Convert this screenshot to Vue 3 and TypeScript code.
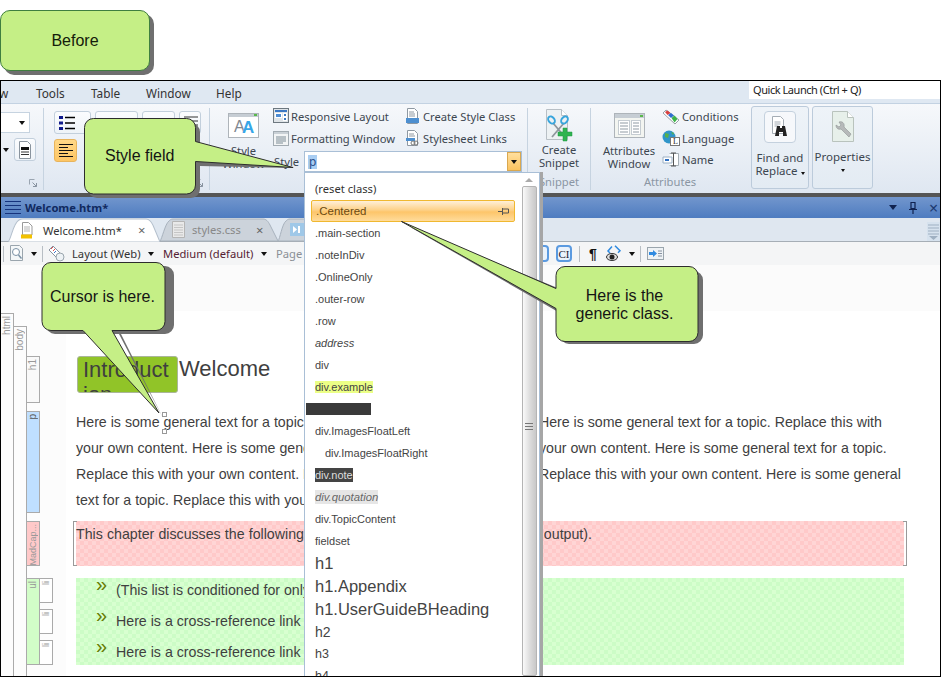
<script setup lang="ts">
interface Item { label: string; cls?: string }
const items: Item[] = [
  { label: '(reset class)', cls: 'reset' },
  { label: '.Centered', cls: 'hot' },
  { label: '.main-section' },
  { label: '.noteInDiv' },
  { label: '.OnlineOnly' },
  { label: '.outer-row' },
  { label: '.row' },
  { label: 'address', cls: 'ital' },
  { label: 'div' },
  { label: 'div.example', cls: 'ex' },
  { label: '', cls: 'bar' },
  { label: 'div.ImagesFloatLeft' },
  { label: 'div.ImagesFloatRight', cls: 'ind' },
  { label: 'div.note', cls: 'note' },
  { label: 'div.quotation', cls: 'quo' },
  { label: 'div.TopicContent' },
  { label: 'fieldset' },
  { label: 'h1', cls: 'h1' },
  { label: 'h1.Appendix', cls: 'h1' },
  { label: 'h1.UserGuideBHeading', cls: 'h1' },
  { label: 'h2', cls: 'h2' },
  { label: 'h3', cls: 'h3' },
  { label: 'h4', cls: 'h3' },
]
const paragraph = [
  'Here is some general text for a topic. Replace this with your own content. Here is some general text for a topic. Replace this with',
  'your own content. Here is some general text for a topic. Replace this with your own content. Here is some general text for a topic.',
  'Replace this with your own content. Here is some general text for a topic. Replace this with your own content. Here is some general',
  'text for a topic. Replace this with your own content.',
]
const listRows = [
  '(This list is conditioned for only one target.)',
  'Here is a cross-reference link to another topic.',
  'Here is a cross-reference link to another topic.',
]
</script>

<template>
  <div class="page">
    <div class="top">
      <div class="before">Before</div>
    </div>

    <div class="win">
      <div class="menu">
        <span class="m m0">w</span><span class="m m1">Tools</span><span class="m m2">Table</span><span class="m m3">Window</span><span class="m m4">Help</span>
        <div class="quick">Quick Launch (Ctrl + Q)</div>
      </div>

      <div class="ribbon">
        <div class="g g1">
          <div class="combo0"><i class="arr"></i></div>
          <div class="row0">
            <i class="arr"></i>
            <div class="btn b22">
              <svg width="14" height="18" viewBox="0 0 14 18"><path d="M1.5.5h8l3 3v14h-11z" fill="#fff" stroke="#8a949e"/><path d="M3 6h8v3H3z" fill="#111"/><path d="M3 11h8M3 13.500h8" stroke="#333"/></svg>
            </div>
          </div>
          <svg class="launch" width="8" height="8" viewBox="0 0 8 8"><path d="M.5.5h5M.5.5v5" stroke="#9aa5b1" fill="none"/><path d="M7.500 7.500l-4-4M7.500 4v3.500H4" stroke="#8893a0" fill="none"/></svg>
        </div>

        <div class="g g2">
          <div class="r2">
            <div class="btn bl1">
              <svg width="16" height="14" viewBox="0 0 16 14"><path d="M0 0h4v3H0zM0 5.500h4v3H0zM0 11h4v3H0z" fill="#101a8c"/><path d="M6 1.500h10M6 7h10M6 12.500h10" stroke="#000" stroke-width="1.500"/></svg>
            </div>
            <div class="btn bl2"></div>
            <div class="btn bl3"></div>
            <div class="btn bl4">
              <svg width="16" height="14" viewBox="0 0 16 14"><path d="M2 1h14M2 5h14M2 9h14M2 13h14" stroke="#333"/></svg>
            </div>
          </div>
          <div class="r2">
            <div class="btn act">
              <svg width="14" height="13" viewBox="0 0 14 13"><path d="M0 .5h14M0 3.500h9M0 6.500h14M0 9.500h9M0 12.500h14" stroke="#111"/></svg>
            </div>
          </div>
          <svg class="launch" width="8" height="8" viewBox="0 0 8 8"><path d="M.5.5h5M.5.5v5" stroke="#9aa5b1" fill="none"/><path d="M7.500 7.500l-4-4M7.500 4v3.500H4" stroke="#8893a0" fill="none"/></svg>
        </div>

        <div class="g g3">
          <div class="big stylewin">
            <svg width="31" height="25" viewBox="0 0 31 25">
              <rect x=".5" y=".5" width="30" height="24" fill="#fff" stroke="#aeb4ba"/>
              <rect x="1" y="1" width="29" height="3" fill="#c6cdd4"/>
              <rect x="26" y="1" width="3" height="2" fill="#5ab84c"/>
              <text x="6" y="19" font-size="16" font-family="Liberation Sans" fill="#7f8891">A</text>
              <text x="14" y="20" font-size="17" font-weight="700" font-family="Liberation Sans" fill="#37a6e8">A</text>
            </svg>
            <span class="lbl">Style<br />Window</span>
          </div>
          <div class="cols">
            <div class="col c1">
              <div class="it">
                <svg width="16" height="16" viewBox="0 0 16 16"><rect x=".5" y=".5" width="15" height="14" fill="#dfe4e8" stroke="#6d7880"/><path d="M2 2h12v2H2z" fill="#3b78c4"/><path d="M2 5h7v5H2z" fill="#fff"/><path d="M3 6h5v3H3z" fill="#4f8dd3"/><path d="M10 5h4v8h-4z" fill="#fff"/><path d="M11 6h2v2h-2zM11 10h2v2h-2z" fill="#3b78c4"/></svg>
                <span>Responsive Layout</span>
              </div>
              <div class="it">
                <svg width="16" height="15" viewBox="0 0 16 15"><rect x=".5" y=".5" width="15" height="14" fill="#f2f4f5" stroke="#a2abb2"/><path d="M1 1h14v2H1z" fill="#c9d0d6"/><path d="M3 6h10M3 8h10M3 10h10M3 12h7" stroke="#7d8c96"/></svg>
                <span>Formatting Window</span>
              </div>
            </div>
            <div class="col c2">
              <div class="it">
                <svg width="13" height="16" viewBox="0 0 13 16"><path d="M1.500.5h7l3 3v12h-10z" fill="#fff" stroke="#8e98a2"/><path d="M3 4h5M3 6h6M3 8h6" stroke="#8e98a2"/><path d="M0 10h13v5H0z" fill="#4d8fd0"/></svg>
                <span>Create Style Class</span>
              </div>
              <div class="it">
                <svg width="13" height="16" viewBox="0 0 13 16"><path d="M1.500.5h7l3 3v12h-10z" fill="#fff" stroke="#8e98a2"/><path d="M3 4h5M3 6h6" stroke="#8e98a2"/><path d="M0 8h9v3H0z" fill="#4d8fd0"/><circle cx="7" cy="13" r="2" fill="none" stroke="#777"/><circle cx="10" cy="13" r="2" fill="none" stroke="#777"/></svg>
                <span>Stylesheet Links</span>
              </div>
            </div>
          </div>
          <div class="stylefield">
            <span class="slabel">Style</span>
            <div class="sinput"><span class="sel">p</span><div class="sdrop"><i class="arr"></i></div></div>
          </div>
        </div>

        <div class="g g4">
          <div class="big snip">
            <svg width="28" height="33" viewBox="0 0 28 33">
              <path d="M1.500.5h15l6 6v24h-21z" fill="#edf1f3" stroke="#b8bfc5"/>
              <path d="M16.500.5v6h6" fill="#fff" stroke="#b8bfc5"/>
              <path d="M8 14l11 13M19 14L7 28" stroke="#8f979d" stroke-width="1.800"/>
              <ellipse cx="6.500" cy="11" rx="2.800" ry="4" transform="rotate(-40 6.500 11)" fill="none" stroke="#38a5dc" stroke-width="2"/>
              <ellipse cx="19.500" cy="11" rx="2.800" ry="4" transform="rotate(40 19.500 11)" fill="none" stroke="#38a5dc" stroke-width="2"/>
              <path d="M18 19h4v4h5v4h-5v5h-4v-5h-5v-4h5z" fill="#2fb350" stroke="#1e9a40" stroke-width=".5"/>
            </svg>
            <span class="lbl">Create<br />Snippet</span>
          </div>
          <span class="glabel">Snippet</span>
        </div>

        <div class="g g5">
          <div class="big attr">
            <svg width="31" height="25" viewBox="0 0 31 25">
              <rect x=".5" y=".5" width="30" height="24" fill="#f3f5f1" stroke="#aeb4ba"/>
              <rect x="1" y="1" width="29" height="4" fill="#c6cdd4"/>
              <rect x="26" y="2" width="3" height="2" fill="#5ab84c"/>
              <rect x="4.500" y="7.500" width="11" height="14" fill="#fff" stroke="#c5ccd2"/>
              <rect x="17.500" y="7.500" width="9" height="14" fill="#fff" stroke="#c5ccd2"/>
              <path d="M6 10h8M6 13h8M6 16h8M6 19h8M19 10h6M19 13h6M19 16h6M19 19h6" stroke="#8f9aa3"/>
            </svg>
            <span class="lbl">Attributes<br />Window</span>
          </div>
          <div class="col c3">
            <div class="it">
              <svg width="18" height="16" viewBox="0 0 18 16"><path d="M1 4l3-3 13 10-4 4z" fill="#fff" stroke="#9aa0a6"/><path d="M3 3l2.500-1.500 3 2.500-3 2z" fill="#d83f3f"/><path d="M6 6l3-2 3 2.500-3 2.500z" fill="#2f6fd0"/><path d="M9.500 9l3-2.500 3 3.500-3 3.500z" fill="#3db24a"/></svg>
              <span>Conditions</span>
            </div>
            <div class="it">
              <svg width="18" height="16" viewBox="0 0 18 16"><circle cx="7" cy="7" r="6.500" fill="#2f95c9"/><path d="M3 3l4 1-1 4-3-1zM9 2l3 1-1 2z" fill="#57b04a"/><rect x="8.500" y="7.500" width="9" height="8" fill="#fff" stroke="#777"/><text x="11" y="14" font-size="8" font-family="Liberation Serif" fill="#222">L</text></svg>
              <span>Language</span>
            </div>
            <div class="it">
              <svg width="18" height="15" viewBox="0 0 18 15"><path d="M7.500 1.500h9v12h-9" fill="#fff" stroke="#a5aeb5"/><path d="M1 5h9v6H1z" fill="#fff" stroke="#9cb0c4"/><path d="M3 7h4v2H3z" fill="#2f6fc1"/><path d="M11.500 1v13M9 1h5M9 14h5" stroke="#555"/></svg>
              <span>Name</span>
            </div>
          </div>
          <span class="glabel">Attributes</span>
        </div>

        <div class="g6">
          <div class="tall find">
            <div class="icobox">
              <svg width="18" height="22" viewBox="0 0 18 22"><path d="M1.500.5h8l3 3v14h-11z" fill="#fff" stroke="#a5adb5"/><path d="M3.500 6h6M3.500 8h6M3.500 10h4" stroke="#a5adb5"/><path d="M6 10h3v2h2v-2h3l2 10h-4v-4H8v4H4z" fill="#222"/></svg>
            </div>
            <span class="lbl">Find and<br />Replace <i class="arr small"></i></span>
          </div>
          <div class="tall props">
            <svg class="wrench" width="22" height="31" viewBox="0 0 22 31"><path d="M.5.500h15l6 6v24H.5z" fill="#e7f0ea" stroke="#b9c3bd"/><path d="M15.500.5v6h6" fill="#fff" stroke="#b9c3bd"/><path d="M17 26l-8-8c-3 1-5-1-5-4l3 2 2-2-2-3c3-1 6 1 5 5l7 7z" fill="#b6b9b9" stroke="#8f9393" stroke-width=".6"/></svg>
            <span class="lbl">Properties</span>
            <i class="arr small"></i>
          </div>
        </div>
      </div>

      <div class="band"></div>

      <div class="title">
        <svg width="16" height="13" viewBox="0 0 16 13"><path d="M0 .5h16M0 4.500h16M0 8.500h16M0 12.500h16" stroke="#16337c"/></svg>
        <b>Welcome.htm*</b>
        <div class="tctl">
          <i class="tarr"></i>
          <svg width="8" height="12" viewBox="0 0 8 12"><path d="M2 .5h4v6H2zM0 7.500h8M4 8v4" fill="none" stroke="#10224f" stroke-width="1.200"/></svg>
          <span class="tx">×</span>
        </div>
      </div>

      <div class="tabs">
        <div class="tab on">
          <svg class="tabbg" viewBox="0 0 152 23" preserveAspectRatio="none"><path d="M0 23c3-2 5-18 11-21 1-1 2-1 4-1h123c3 0 5 2 7 6l7 16z" fill="#fff" stroke="#b3bfcc"/></svg>
          <svg class="tabico" width="12" height="17" viewBox="0 0 12 17"><path d="M1.500.5h6l3.500 3.500v9H1.500z" fill="#fff" stroke="#9a9a9a"/><path d="M3 5h6M3 7h6M3 9h6" stroke="#b5b5b5"/><rect y="12.500" width="11" height="4" fill="#f2c100"/></svg>
          <span class="tt">Welcome.htm*</span><span class="tc">×</span>
        </div>
        <div class="tab off">
          <svg class="tabbg" viewBox="0 0 118 23" preserveAspectRatio="none"><path d="M0 23c2-2 5-17 9-20 1-1 2-2 4-2h90c3 0 5 2 7 6l8 16z" fill="#ccd3db" stroke="#a8b2bd"/></svg>
          <svg class="tabico2" width="13" height="17" viewBox="0 0 13 17"><path d="M.5.500h12v16H.5z" fill="#e9e9e9" stroke="#b5b5b5"/><path d="M2 4h9M2 6.500h9M2 9h9M2 11.500h9M2 14h9" stroke="#c5c5c5"/></svg>
          <span class="tt2">styles.css</span><span class="tc2">×</span>
        </div>
        <div class="tab last">
          <svg class="tabbg" viewBox="0 0 30 23" preserveAspectRatio="none"><path d="M0 23c2-2 4-17 8-20 1-1 2-2 4-2h18v22z" fill="#ccd3db" stroke="#a8b2bd"/></svg>
          <svg class="tabico3" width="14" height="13" viewBox="0 0 14 13"><rect width="14" height="13" fill="#9fc8e8"/><path d="M3 3l4 3.500L3 10zM8 3h2v7H8z" fill="#fff"/></svg>
        </div>
        <div class="scroller">
          <svg width="11" height="16" viewBox="0 0 11 16"><path d="M0 1h11M0 4h11M0 7h11M0 10h11" stroke="#9fb0c2"/><path d="M1 12h9l-4.500 4z" fill="#9fb0c2"/></svg>
        </div>
      </div>

      <div class="tools">
        <i class="vsep s0"></i>
        <svg class="mag" width="14" height="17" viewBox="0 0 14 17"><path d="M.5.500h9l3 3v12H.5z" fill="#f4f7f8" stroke="#9aa5ad"/><circle cx="6" cy="7" r="3.500" fill="#fff" stroke="#7c93a6"/><path d="M8.500 10l3 3.500" stroke="#7c93a6" stroke-width="1.500"/></svg>
        <i class="arr ta"></i>
        <i class="vsep s1"></i>
        <svg class="tag" width="17" height="17" viewBox="0 0 17 17"><path d="M1 5l4-4 7 7-4 4z" fill="#fff" stroke="#8892a0"/><path d="M3 4l2-2M5 6l2-2" stroke="#e05050"/><path d="M6 8l2-2" stroke="#3a72c8"/><circle cx="12" cy="12" r="4" fill="#eef2f5" stroke="#9aa5ad"/></svg>
        <span class="tl t1">Layout (Web)</span><i class="arr"></i>
        <span class="tl t2">Medium (default)</span><i class="arr"></i>
        <span class="tl t3">Page</span>
        <div class="tright">
          <span class="kb k1">I</span>
          <span class="kb k2">CI</span>
          <i class="vsep v1"></i>
          <span class="pil">¶</span>
          <svg class="eye" width="17" height="17" viewBox="0 0 17 17"><path d="M9 .8l5 5-2 2M6 1.500L2 6l2 2" fill="none" stroke="#2f8ae0" stroke-width="1.500"/><ellipse cx="6" cy="12" rx="5.500" ry="3.500" fill="#ddd" stroke="#333"/><circle cx="6" cy="12" r="2.500" fill="#222"/></svg>
          <i class="arr earr"></i>
          <i class="vsep v2"></i>
          <svg class="pane" width="17" height="13" viewBox="0 0 17 13"><rect x=".5" y=".5" width="16" height="12" fill="#eef2f5" stroke="#9aa5ad"/><path d="M2 5h4V3l4 3.500L6 10V8H2z" fill="#2f8ae0"/><path d="M11 4h4M11 6.500h4M11 9h4" stroke="#8892a0"/></svg>
        </div>
      </div>

      <div class="editor">
        <div class="rail">
          <div class="rc r-html"><div class="railtab"><span class="vt">html</span></div></div>
          <div class="rc r-body"><div class="railtab"><span class="vt">body</span></div></div>
          <div class="rc r-blocks">
            <div class="blk bh1"><span class="vt">h1</span></div>
            <div class="blk bp"><span class="vt vdark">p</span></div>
            <div class="blk bmc"><span class="vt">MadCap...</span></div>
            <div class="blk bul"><span class="vt">ul</span></div>
          </div>
          <div class="rc r-li">
            <div class="blk bli"><span class="vt">li</span></div>
            <div class="blk bli"><span class="vt">li</span></div>
            <div class="blk bli"><span class="vt">li</span></div>
          </div>
        </div>
        <div class="doc">
          <div class="fade"></div>
          <div class="head">
            <div class="hbox">Introduct<br />ion</div>
            <div class="hword">Welcome</div>
          </div>
          <div class="para">
            <div v-for="(line, i) in paragraph" :key="i" class="pline">{{ line }}</div>
          </div>
          <div class="pink">This chapter discusses the following topic (this is conditioned for a type of output).</div>
          <div class="green">
            <div v-for="(row, i) in listRows" :key="i" class="lrow"><span class="bull">»</span><span class="ltxt">{{ row }}</span></div>
          </div>
        </div>
      </div>
    </div>

    <div class="handle h-a"></div>
    <div class="handle h-b"></div>

    <div class="dd">
      <div class="ddlist">
        <div v-for="(it, i) in items" :key="i" class="ditem" :class="it.cls">
          <span v-if="it.label" class="dl">{{ it.label }}</span>
          <svg v-if="it.cls === 'hot'" class="dpin" width="11" height="9" viewBox="0 0 11 9"><path d="M0 4.500h4M4.500 1v7M4.500 2h6v4h-6" fill="none" stroke="#555"/></svg>
        </div>
      </div>
      <div class="sb">
        <i class="up"></i>
        <div class="thumb"><svg width="8" height="7" viewBox="0 0 8 7"><path d="M0 .5h8M0 3.500h8M0 6.500h8" stroke="#777"/></svg></div>
      </div>
    </div>

    <div class="call c-style">
      <svg width="215" height="85" viewBox="0 0 215 85">
        <path class="sh" d="M14 5h94a9 9 0 0 1 9 9v14l95 22-95-2v23a9 9 0 0 1-9 9H14a9 9 0 0 1-9-9V14a9 9 0 0 1 9-9z"/>
        <path class="fg" d="M10.500 .5h93a9 9 0 0 1 9 9v14l97.500 26-97.500-6v23.500a9 9 0 0 1-9 9h-93a9 9 0 0 1-9-9V9.500a9 9 0 0 1 9-9z"/>
      </svg>
      <span class="ct" style="left:22px;top:29px">Style field</span>
    </div>

    <div class="call c-cursor">
      <svg width="135" height="160" viewBox="0 0 135 160">
        <path class="sh" d="M14 4h110a9 9 0 0 1 9 9v50a9 9 0 0 1-9 9H78l44 84-42-84H14a9 9 0 0 1-9-9V13a9 9 0 0 1 9-9z"/>
        <path class="fg" d="M10 .5h105a9 9 0 0 1 9 9v50a9 9 0 0 1-9 9H71l47 82.500-76-82.500H10a9 9 0 0 1-9-9v-50a9 9 0 0 1 9-9z"/>
      </svg>
      <span class="ct" style="left:9px;top:26px">Cursor is here.</span>
    </div>

    <div class="call c-here">
      <svg width="300" height="128" viewBox="0 0 300 128">
        <path class="sh" d="M168 50h125a9 9 0 0 1 9 9v55a9 9 0 0 1-9 9H168a9 9 0 0 1-9-9V92l-150-86 150 62z"/>
        <path class="fg" d="M164 45.500h124a9 9 0 0 1 9 9v57a9 9 0 0 1-9 9H164a9 9 0 0 1-9-9v-24L.5 .5l154.500 67v-13a9 9 0 0 1 9-9z"/>
      </svg>
      <span class="ct ctc" style="left:155px;top:66px;width:137px">Here is the<br />generic class.</span>
    </div>
  </div>
</template>

<style>
html, body { margin: 0; background: #fff; }
</style>

<style scoped>
.page { position: relative; width: 941px; height: 677px; overflow: hidden; background: #fff; font-family: "Noto Sans", "Liberation Sans", sans-serif; font-size: 11.2px; color: #3c4650; }
.top { height: 80px; box-sizing: border-box; padding-top: 10px; }
.before { width: 150px; height: 61px; box-sizing: border-box; border: 1px solid #3f7f3f; border-radius: 10px; background: #c5ef86; box-shadow: 4px 4px 0 #6f6f6f; display: flex; align-items: center; justify-content: center; font: 16px "Liberation Sans", sans-serif; color: #14200a; }

.win { height: 597px; box-sizing: border-box; border: 1px solid #000; display: flex; flex-direction: column; overflow: hidden; }

.menu { height: 22px; flex: none; box-sizing: border-box; padding-top: 2px; background: #dfe8f2; position: relative; display: flex; align-items: center; font-size: 11.8px; color: #333; }
.m { flex: none; }
.m0 { width: 37px; margin-left: -2px; }
.m1 { width: 55px; }
.m2 { width: 55px; }
.m3 { width: 70px; }
.m4 { width: 40px; }
.quick { margin-left: auto; width: 191px; height: 18px; align-self: flex-start; margin-top: -2px; background: #fff; box-sizing: border-box; padding: 0 4px; line-height: 18px; font-size: 11px; letter-spacing: -.45px; color: #222; }

.ribbon { height: 90px; flex: none; display: flex; border-top: 1px solid #c3d2e2; box-sizing: border-box; background: linear-gradient(#f6f8fb, #dfe7f1); }
.g { position: relative; flex: none; box-sizing: border-box; height: 82px; margin-top: 4px; }
.g + .g { border-left: 1px solid #c6d3e0; }
.g1 { width: 42px; }
.g2 { width: 166px; }
.g3 { width: 318px; }
.g4 { width: 63px; }
.g5 { width: 159px; }
.arr { display: inline-block; width: 0; height: 0; border: 3px solid transparent; border-top: 4px solid #111; border-bottom: 0; }
.arr.small { border-width: 3px 2.5px 0; }
.combo0 { width: 29px; height: 21px; margin-top: 4px; background: #fff; border: 1px solid #c6d3e0; border-left: 0; box-sizing: border-box; display: flex; align-items: center; justify-content: flex-end; padding-right: 4px; }
.row0 { display: flex; align-items: center; gap: 5px; margin-top: 5px; padding-left: 2px; }
.btn { box-sizing: border-box; height: 23px; border: 1px solid #c2cfdc; border-radius: 3px; display: flex; align-items: center; justify-content: center; background: linear-gradient(#fbfcfe, #eef3f8); }
.b22 { width: 22px; }
.launch { position: absolute; bottom: 3px; right: 6px; }
.r2 { display: flex; margin: 3px 0 0 10px; gap: 4px; }
.r2 + .r2 { margin-top: 5px; }
.bl1 { width: 37px; justify-content: flex-start; padding-left: 4px; }
.bl2 { width: 43px; }
.bl3 { width: 33px; }
.bl4 { width: 22px; }
.act { width: 23px; background: linear-gradient(#ffd887, #fdc564); border-color: #e8b45c; }

.big { display: flex; flex-direction: column; align-items: center; color: #3c4650; }
.lbl { line-height: 13px; text-align: center; }
.stylewin { position: absolute; left: 2px; top: 5px; width: 63px; }
.stylewin .lbl { margin-top: 5.5px; }
.cols { position: absolute; left: 63px; top: -3px; display: flex; }
.col { display: flex; flex-direction: column; }
.c1 { width: 133px; }
.c2 { width: 115px; }
.it { height: 22px; display: flex; align-items: center; gap: 2px; white-space: nowrap; }
.it svg { flex: none; }
.c2 .it { gap: 4px; }
.stylefield { position: absolute; left: 64px; top: 43px; display: flex; align-items: center; }
.slabel { width: 30px; }
.sinput { width: 218px; height: 21px; box-sizing: border-box; border: 1px solid #a9bfd6; background: #fff; display: flex; align-items: center; padding-left: 3px; }
.sel { background: #a9cdf2; color: #2a4d8a; line-height: 14px; padding: 0 1px; font-size: 12px; }
.sdrop { margin-left: auto; width: 14px; height: 19px; background: linear-gradient(#ffdf9e, #fbc35f); border: 1px solid #d9a850; box-sizing: border-box; display: flex; align-items: center; justify-content: center; }

.glabel { position: absolute; bottom: 1px; left: 0; right: 0; text-align: center; color: #8a96a3; line-height: 14px; }
.snip { padding-top: 1px; }
.snip .lbl { margin-top: 1px; }
.g5 .attr { position: absolute; left: 0; top: 5px; width: 76px; }
.attr .lbl { margin-top: 5.5px; }
.c3 { position: absolute; left: 71px; top: -2px; }
.c3 .it { gap: 2px; height: 21.500px; }

.g6 { display: flex; gap: 3px; margin-left: 2px; margin-top: 2px; height: 83px; }
.tall { box-sizing: border-box; border: 1px solid #bccbdb; border-radius: 3px; background: linear-gradient(#eef3f8, #e3ebf3); display: flex; flex-direction: column; align-items: center; }
.find { width: 58px; }
.props { width: 61px; }
.icobox { width: 32px; height: 32px; margin-top: 4px; border: 1px solid #c4d1de; border-radius: 4px; background: #f6f8fb; display: flex; align-items: center; justify-content: center; box-sizing: border-box; flex: none; }
.tall .lbl { margin-top: 7.5px; font-size: 11.5px; }
.wrench { margin-top: 4px; flex: none; }
.props .lbl { margin-top: 7.5px; }
.props .arr { margin-top: 6px; }

.band { height: 4px; flex: none; background: #555; }

.title { height: 21px; flex: none; background: linear-gradient(#7296cd, #4e7cc0); display: flex; align-items: center; padding-left: 4px; gap: 4px; color: #10295f; }
.title b { font: 700 11.2px "Noto Sans", sans-serif; }
.tctl { margin-left: auto; display: flex; align-items: center; gap: 12px; }
.tarr { width: 0; height: 0; border: 4.500px solid transparent; border-top: 5px solid #10224f; border-bottom: 0; }
.tx { font-size: 16px; line-height: 16px; color: #1d3a70; width: 11px; }

.tabs { height: 24px; flex: none; background: #dfe7f0; border-bottom: 1px solid #a6aeb6; box-sizing: border-box; display: flex; padding-left: 7px; align-items: flex-end; position: relative; }
.tab { position: relative; height: 23px; flex: none; display: flex; align-items: center; }
.tabbg { position: absolute; inset: 0; width: 100%; height: 100%; }
.tab.on { width: 152px; z-index: 1; margin-bottom: -1px; height: 24px; }
.tab.off { width: 118px; }
.tab.last { width: 30px; }
.tabico, .tabico2, .tabico3, .tt, .tt2, .tc, .tc2 { position: relative; flex: none; }
.tabico { margin-left: 13px; }
.tt { margin-left: 10px; width: 85px; font-size: 11.200px; color: #333; }
.tc { margin-left: 10px; color: #666; font-size: 13px; }
.tabico2 { margin-left: 12px; }
.tt2 { margin-left: 7px; width: 64px; font-size: 11.200px; color: #888; }
.tc2 { color: #666; font-size: 13px; }
.tabico3 { margin-left: 12px; }
.scroller { margin-left: auto; width: 13px; height: 19px; background: #d6e2ee; display: flex; align-items: center; justify-content: center; }

.tools { height: 23px; flex: none; background: #f4f5f6; display: flex; align-items: center; font-size: 11.200px; }
.vsep { width: 1px; height: 16px; background: #b8bec4; flex: none; }
.s0 { margin-left: 2px; }
.mag { margin-left: 6px; }
.ta { margin-left: 7px; }
.s1 { margin-left: 5px; }
.tag { margin-left: 5px; }
.tl { flex: none; color: #333; }
.t1 { margin-left: 7px; width: 76px; }
.t2 { margin-left: 9px; width: 98px; color: #552233; }
.t3 { margin-left: 9px; width: 30px; color: #8a8f95; }
.tools > .arr { flex: none; }
.tright { margin-left: 225px; display: flex; align-items: center; flex: none; }
.kb { box-sizing: border-box; height: 17px; border: 2px solid #5b9ae0; border-radius: 4px; background: #eaf2fb; font: 11px "Liberation Serif", serif; color: #223; display: flex; align-items: center; justify-content: center; flex: none; }
.k1 { width: 18px; }
.k2 { width: 16px; margin-left: 7px; }
.v1 { margin-left: 7px; }
.pil { width: 8px; font: 700 14px "Liberation Sans", sans-serif; color: #111; margin-left: 9px; }
.eye { margin-left: 9px; flex: none; }
.earr { margin-left: 6px; flex: none; }
.v2 { margin-left: 5px; }
.pane { margin-left: 6px; flex: none; }

.editor { flex: 1; min-height: 0; display: flex; position: relative; background: #fff; }
.rail { width: 65px; flex: none; background: #fcfcfc; display: flex; align-items: flex-start; height: 100%; }
.rc { flex: none; box-sizing: border-box; }
.r-html { width: 13px; height: 100%; padding-top: 48px; }
.r-body { width: 13px; height: 100%; padding-top: 61px; }
.railtab { height: 100%; box-sizing: border-box; border-top: 1px solid #aaa; border-right: 1px solid #aaa; padding-top: 2px; background: #fcfcfc; display: flex; justify-content: center; align-items: flex-start; }
.r-blocks { width: 13px; padding-top: 91px; }
.r-li { width: 13px; padding-top: 313px; }
.vt { writing-mode: vertical-rl; transform: rotate(180deg); font: 10px/12px "Liberation Sans", sans-serif; color: #999; display: block; white-space: nowrap; }
.vdark { color: #555; }
.blk { box-sizing: border-box; width: 13px; border: 1px solid #aaa; display: flex; justify-content: center; align-items: flex-start; overflow: hidden; padding-top: 2px; }
.r-blocks .blk { border-left: 0; }
.bh1 { height: 47px; margin-bottom: 8px; background: #f9f9f9; }
.bp { height: 102px; margin-bottom: 8px; background: #bfdfff; }
.bmc { height: 45px; margin-bottom: 12px; background: #ffc9c9; }
.bmc .vt { font-size: 9px; }
.bul { height: 87px; background: #d2fdc8; }
.bli { height: 25px; margin-bottom: 6px; background: #fff; border-left: 0; }
.bli .vt { font-size: 9px; }
.doc { flex: 1; min-width: 0; padding-left: 10px; font-family: "Liberation Sans", sans-serif; color: #3f3f3f; overflow: hidden; white-space: nowrap; }
.fade { height: 46px; margin-left: -10px; background: #fbfbfb; }
.head { display: flex; margin-top: 45px; margin-left: 1px; height: 37px; font-size: 22px; line-height: 25px; }
.hbox { width: 101px; height: 37px; box-sizing: border-box; overflow: hidden; background: #91c428; border: 1px solid #aab69a; border-radius: 3px; padding-left: 5px; flex: none; }
.hword { margin-left: 1px; }
.para { margin-top: 16px; font-size: 14.200px; line-height: 26px; }
.pink { width: 828px; height: 45px; margin-top: 8px; box-sizing: border-box; font-size: 14.200px; line-height: 26px; word-spacing: .2px; background: repeating-conic-gradient(#ffd5d5 0 25%, #ffc9c9 0 50%) 0 0 / 8px 8px; position: relative; }
.pink::before, .pink::after { content: ""; position: absolute; top: 0; bottom: 0; width: 3px; border: 1px solid #999; }
.pink::before { left: -3px; border-right: 0; }
.pink::after { right: -3px; border-left: 0; }
.green { width: 828px; height: 87px; margin-top: 12px; background: repeating-conic-gradient(#d8ffd0 0 25%, #ccfcc6 0 50%) 0 0 / 8px 8px; }
.lrow { height: 31px; display: flex; align-items: flex-start; font-size: 14.200px; line-height: 24px; padding-left: 20px; box-sizing: border-box; }
.bull { font-size: 20px; color: #667a00; width: 20px; margin-top: -4px; line-height: 20px; }

.handle { position: absolute; left: 162px; width: 5px; height: 5px; box-sizing: border-box; background: #fff; border: 1px solid #999; }
.h-a { top: 412px; }
.h-b { top: 429px; }

.dd { position: absolute; left: 304px; top: 172px; width: 236px; height: 504px; box-sizing: border-box; background: #fff; border: 1px solid #a9bfd6; border-bottom: 0; overflow: hidden; display: flex; font: 11px "Liberation Sans", sans-serif; color: #444; box-shadow: 3px 0 0 #a6a6a6; }
.ddlist { flex: 1; min-width: 0; padding: 5px 0 0 10px; white-space: nowrap; position: relative; }
.ditem { height: 22px; display: flex; align-items: center; }
.reset { font-family: "Noto Sans", sans-serif; font-size: 11.200px; color: #333; }
.reset .dl { margin-top: -2px; }
.hot { position: relative; margin: 0 6px 0 -4px; padding-left: 4px; box-sizing: border-box; border: 1px solid #f0b830; border-radius: 2px; background: linear-gradient(#fff0d8, #fdd188 45%, #fdc56a 55%, #ffdc9b); color: #6a4a12; font-size: 11.500px; height: 22px; }
.dpin { position: absolute; right: 5px; top: 6px; }
.ital { font-style: italic; }
.ex .dl { background: #ecff86; }
.bar::before { content: ""; display: block; width: 65px; height: 12px; margin-left: -9px; background: #3a3a3a; }
.ind { padding-left: 10px; }
.note .dl { background: #444; color: #ddd; padding: 1px 0; }
.quo .dl { background: #e6e6e6; font-style: italic; font-size: 11.300px; color: #666; padding: 1px 0; }
.h1 { font-size: 16.500px; height: 23px; }
.h2 { font-size: 14px; height: 21.500px; }
.h3 { font-size: 12.500px; }
.sb { width: 18px; flex: none; background: #fff; position: relative; display: flex; flex-direction: column; align-items: center; padding-right: 2px; box-sizing: border-box; }
.up { width: 0; height: 0; margin: 5px 0 4px; border: 4px solid transparent; border-bottom: 4px solid #aaa; border-top: 0; }
.thumb { width: 15px; flex: 1; box-sizing: border-box; border: 1px solid #b4b4b4; border-radius: 2px; background: linear-gradient(90deg, #fafafa, #d9d9d9 60%, #c8c8c8); display: flex; align-items: center; justify-content: center; padding-bottom: 10px; }

.call { position: absolute; }
.call svg { display: block; overflow: visible; }
.sh { fill: #6f6f6f; }
.fg { fill: #c5ef86; stroke: #2d2d2d; stroke-width: 1; }
.ct { position: absolute; font: 16px/18px "Liberation Sans", sans-serif; color: #141414; white-space: nowrap; }
.ctc { text-align: center; }
.c-style { left: 83px; top: 118px; }
.c-cursor { left: 41px; top: 262px; }
.c-here { left: 401px; top: 221px; }
</style>
